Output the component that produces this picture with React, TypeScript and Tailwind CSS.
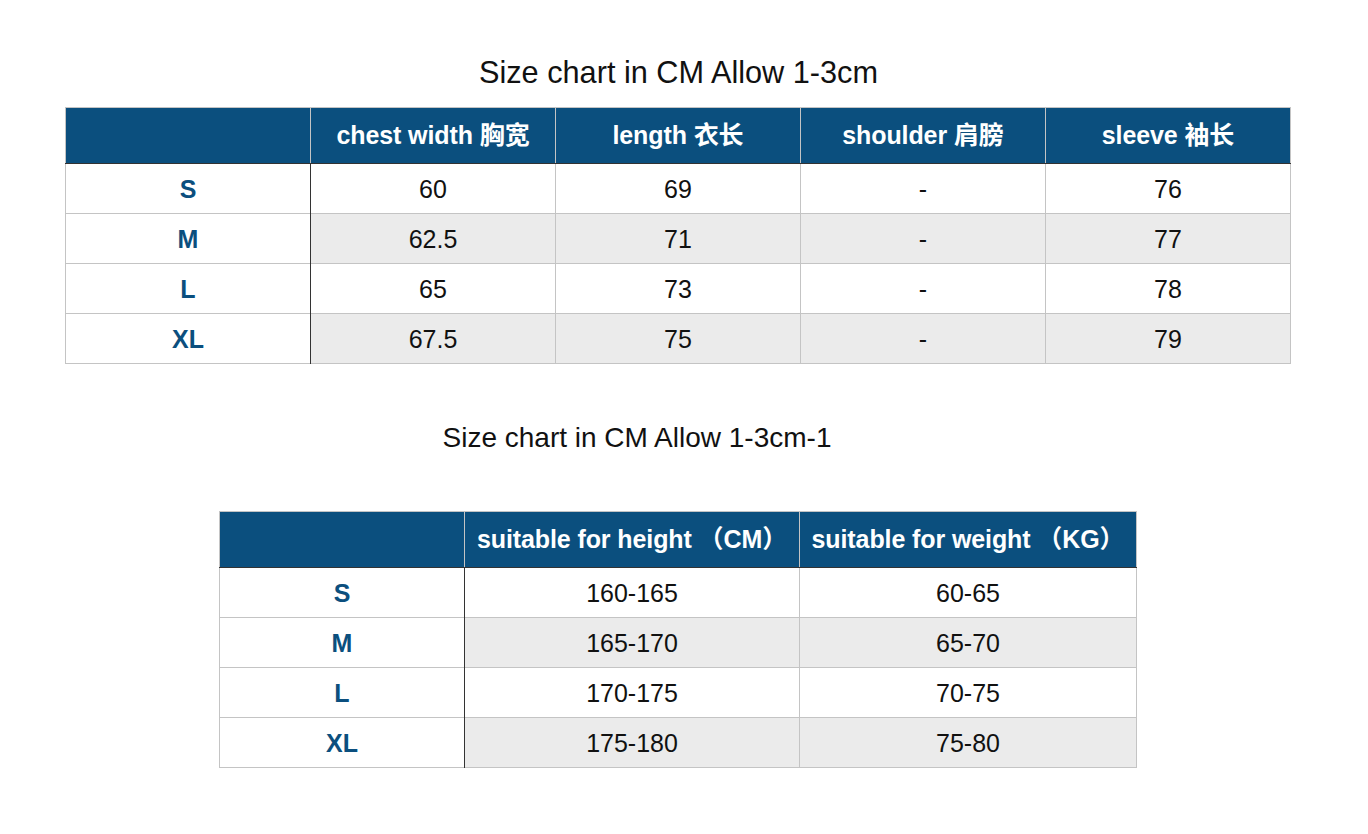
const font = { fontFamily: '"Liberation Sans", Arial, "Noto Sans CJK SC", sans-serif' }

type Row = { size: string; values: string[] }

const chart1Head = ['chest width 胸宽', 'length 衣长', 'shoulder 肩膀', 'sleeve 袖长']
const chart1Rows: Row[] = [
  { size: 'S', values: ['60', '69', '-', '76'] },
  { size: 'M', values: ['62.5', '71', '-', '77'] },
  { size: 'L', values: ['65', '73', '-', '78'] },
  { size: 'XL', values: ['67.5', '75', '-', '79'] },
]

const chart2Head = ['suitable for height （CM）', 'suitable for weight （KG）']
const chart2Rows: Row[] = [
  { size: 'S', values: ['160-165', '60-65'] },
  { size: 'M', values: ['165-170', '65-70'] },
  { size: 'L', values: ['170-175', '70-75'] },
  { size: 'XL', values: ['175-180', '75-80'] },
]

function SizeTable({ head, rows, widths }: { head: string[]; rows: Row[]; widths: string[] }) {
  return (
    <table className="border-collapse border border-[#c4c4c4] text-center" style={font}>
      <colgroup>
        {widths.map((w, i) => (
          <col key={i} className={w} />
        ))}
      </colgroup>
      <thead>
        <tr className="h-[56px] bg-[#0b4f7e] text-white">
          <th className="border-r border-b border-r-[#c4c4c4] border-b-[#333]" />
          {head.map((h) => (
            <th
              key={h}
              className="whitespace-nowrap border-x border-b border-x-[#c4c4c4] border-b-[#333] pt-[1px] text-[25px] font-bold tracking-[-0.1px]"
            >
              {h}
            </th>
          ))}
        </tr>
      </thead>
      <tbody>
        {rows.map((row, i) => (
          <tr key={row.size} className="h-[50px]">
            <td className="border-t border-r border-t-[#c4c4c4] border-r-[#333] bg-white pt-[2px] text-[25px] font-bold text-[#0b4f7e]">
              {row.size}
            </td>
            {row.values.map((v, j) => (
              <td
                key={j}
                className={`border border-[#c4c4c4] pt-[2px] text-[25px] text-[#111] ${i % 2 ? 'bg-[#ebebeb]' : 'bg-white'}`}
              >
                {v}
              </td>
            ))}
          </tr>
        ))}
      </tbody>
    </table>
  )
}

export default function App() {
  return (
    <div className="min-h-[834px] w-[1368px] bg-white pt-[55px]" style={font}>
      <h1 className="pr-[11px] text-center text-[30.7px] leading-[36px] text-[#111]">
        Size chart in CM Allow 1-3cm
      </h1>
      <div className="mt-[16px] pl-[65px]">
        <SizeTable
          head={chart1Head}
          rows={chart1Rows}
          widths={['w-[245px]', 'w-[245px]', 'w-[245px]', 'w-[245px]', 'w-[245px]']}
        />
      </div>
      <h2 className="mt-[57px] pr-[94px] text-center text-[28px] leading-[34px] text-[#111]">
        Size chart in CM Allow 1-3cm-1
      </h2>
      <div className="mt-[56px] pl-[219px]">
        <SizeTable head={chart2Head} rows={chart2Rows} widths={['w-[245px]', 'w-[335px]', 'w-[337px]']} />
      </div>
    </div>
  )
}
